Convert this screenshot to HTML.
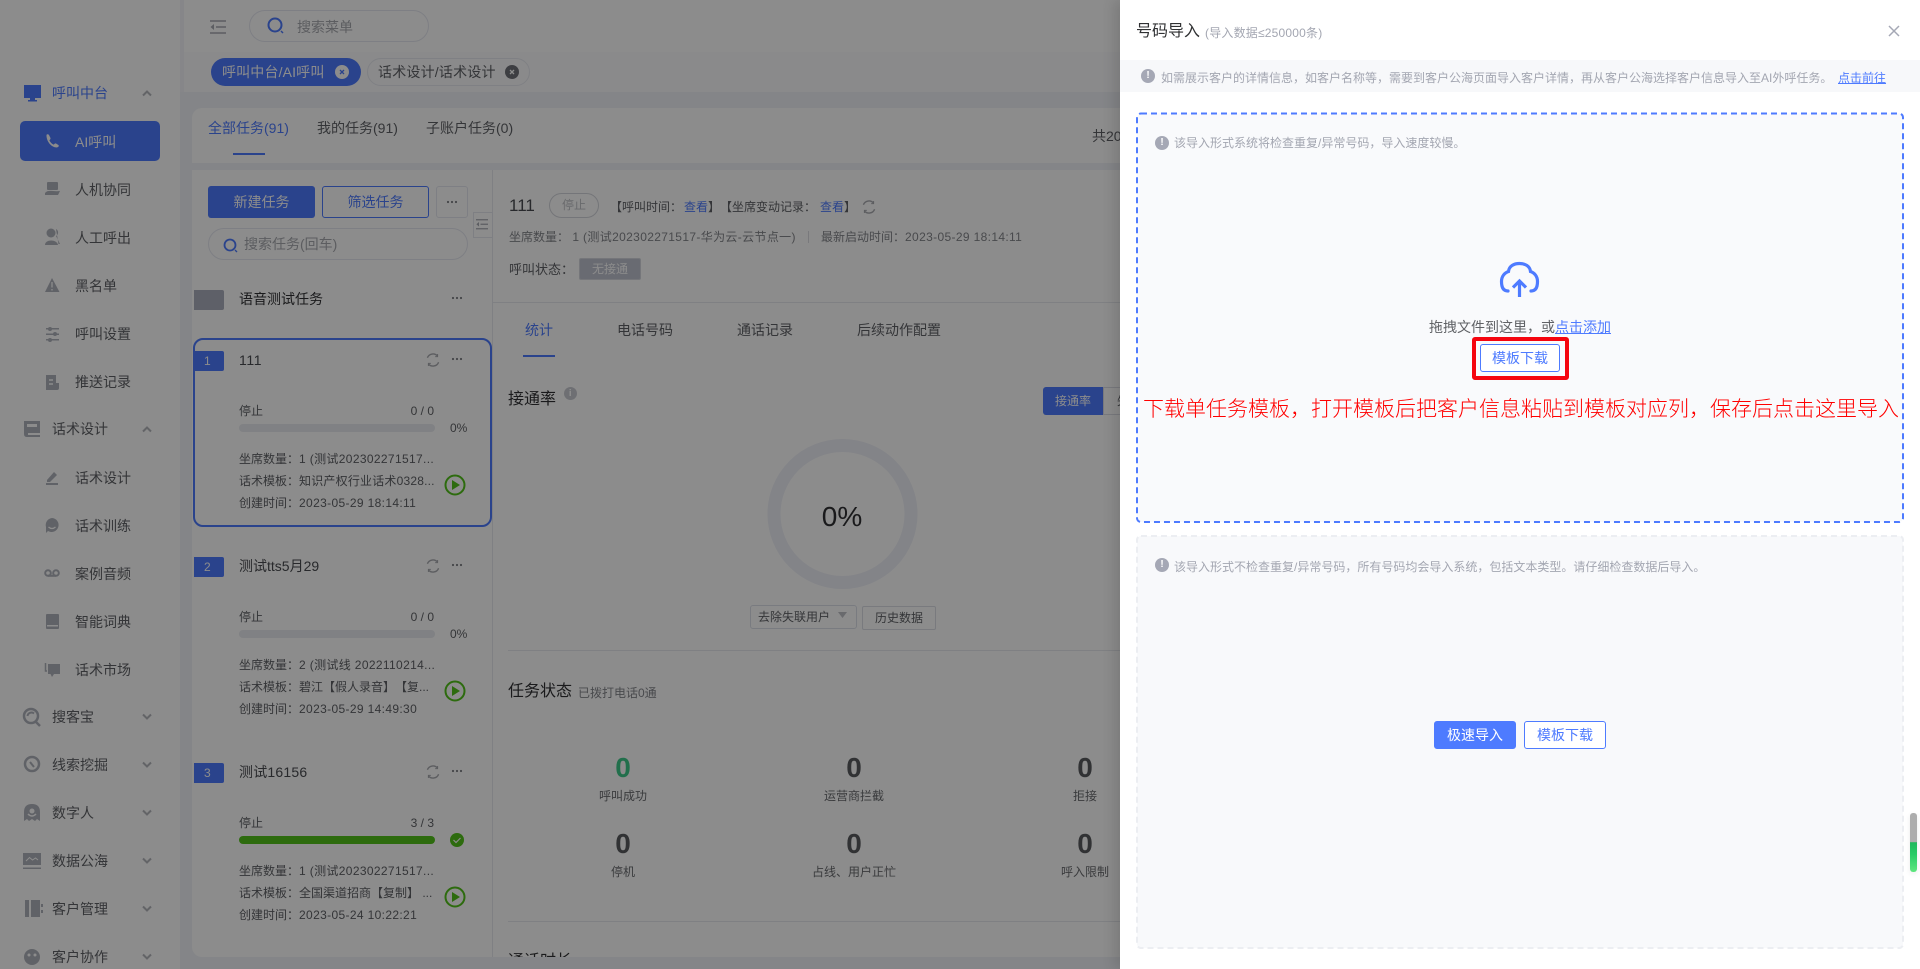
<!DOCTYPE html>
<html lang="zh-CN">
<head>
<meta charset="utf-8">
<title>号码导入</title>
<style>
*{box-sizing:border-box}
html,body{margin:0;padding:0;width:1920px;height:969px;overflow:hidden;background:#fff}
body{font-family:"Liberation Sans","Noto Sans CJK SC",sans-serif;font-size:14px;color:#606266;position:relative;text-spacing-trim:space-all}
.a{position:absolute}
.t{position:absolute;height:20px;line-height:20px;white-space:nowrap}
.s12{font-size:12px}.s16{font-size:16px}
.c{text-align:center}
.blue{color:#4e7bff}
.dk{color:#4a4c50}
.ls{letter-spacing:.35px}
.ls1{letter-spacing:.2px}
svg{position:absolute;left:0;top:0;overflow:visible}
.bar{position:absolute;left:239px;width:196px;height:8px;border-radius:4px;background:#e9ebf0}
.badge{position:absolute;left:194px;width:30px;height:20px;background:#4e7bff;color:#fff;font-size:12px;line-height:20px;padding-left:10px;border-radius:0 2px 2px 0}
.num{position:absolute;width:120px;text-align:center;font-size:28px;font-weight:bold;line-height:30px;height:30px;color:#5a5c60}
.lab{position:absolute;width:140px;text-align:center;font-size:12px;line-height:20px;height:20px;color:#6a6c70}
#overlay{position:absolute;left:0;top:0;width:1120px;height:969px;background:rgba(0,0,0,.45)}
#drawer{position:absolute;left:1120px;top:0;width:800px;height:969px;background:#fff;box-shadow:-6px 0 12px rgba(0,0,0,.12);overflow:hidden}
#drawer .t{color:#a3a6b1;font-size:12px}
.ic{position:absolute;width:14px;height:14px;border-radius:50%;background:#a5a8b5;color:#fff;font-size:10px;line-height:14px;text-align:center;font-weight:bold}
.btn{position:absolute;height:28px;line-height:26px;border:1px solid #4e7bff;border-radius:3px;background:#fff;color:#4e7bff;text-align:center;font-size:14px}
</style>
</head>
<body>
<!-- Underlying application -->
<div class="a" style="left:0;top:0;width:1120px;height:969px;background:#fff;overflow:hidden">
  <div class="a" style="left:180px;top:92px;width:940px;height:877px;background:#f0f2f7"></div>
  <div class="a" style="left:180px;top:0;width:4px;height:92px;background:#f4f5f9"></div>
  <div class="a" style="left:184px;top:52px;width:936px;height:40px;background:#fbfbfd"></div>
  <div class="a" style="left:192px;top:108px;width:928px;height:55px;background:#fff;border-radius:10px 0 0 0"></div>
  <div class="a" style="left:192px;top:170px;width:928px;height:787px;background:#fff;border-radius:0 0 0 10px;overflow:hidden">
    <div class="t" style="left:316px;top:782px;font-size:16px;color:#303133">通话时长</div>
  </div>
  <div class="a" style="left:492px;top:170px;width:1px;height:787px;background:#e8e9ee"></div>
  <div class="a" style="left:493px;top:302px;width:627px;height:1px;background:#e8e9ee"></div>
  <div class="a" style="left:508px;top:650px;width:612px;height:1px;background:#e8e9ee"></div>
  <div class="a" style="left:508px;top:921px;width:612px;height:1px;background:#e8e9ee"></div>

  <!-- Sidebar -->
  <div class="a" style="left:20px;top:121px;width:140px;height:40px;background:#4e7bff;border-radius:5px"></div>
  <div class="t blue" style="left:52px;top:83px">呼叫中台</div>
  <div class="t" style="left:75px;top:132px;color:#fff">AI呼叫</div>
  <div class="t" style="left:75px;top:180px">人机协同</div>
  <div class="t" style="left:75px;top:228px">人工呼出</div>
  <div class="t" style="left:75px;top:276px">黑名单</div>
  <div class="t" style="left:75px;top:324px">呼叫设置</div>
  <div class="t" style="left:75px;top:372px">推送记录</div>
  <div class="t" style="left:52px;top:419px">话术设计</div>
  <div class="t" style="left:75px;top:468px">话术设计</div>
  <div class="t" style="left:75px;top:516px">话术训练</div>
  <div class="t" style="left:75px;top:564px">案例音频</div>
  <div class="t" style="left:75px;top:612px">智能词典</div>
  <div class="t" style="left:75px;top:660px">话术市场</div>
  <div class="t" style="left:52px;top:707px">搜客宝</div>
  <div class="t" style="left:52px;top:755px">线索挖掘</div>
  <div class="t" style="left:52px;top:803px">数字人</div>
  <div class="t" style="left:52px;top:851px">数据公海</div>
  <div class="t" style="left:52px;top:899px">客户管理</div>
  <div class="t" style="left:52px;top:947px">客户协作</div>

  <!-- Header -->
  <div class="a" style="left:249px;top:10px;width:180px;height:32px;border:1px solid #e6e8f0;border-radius:16px"></div>
  <div class="t" style="left:297px;top:17px;color:#a8aab0">搜索菜单</div>
  <div class="a" style="left:211px;top:58px;width:150px;height:28px;background:#4e7bff;border-radius:14px"></div>
  <div class="t" style="left:222px;top:62px;color:#fff;letter-spacing:.15px">呼叫中台/AI呼叫</div>
  <div class="a" style="left:367px;top:58px;width:163px;height:28px;border:1px solid #e8eaf0;border-radius:14px"></div>
  <div class="t" style="left:378px;top:62px;letter-spacing:.2px">话术设计/话术设计</div>

  <!-- Tabs -->
  <div class="t blue" style="left:208px;top:118px">全部任务(91)</div>
  <div class="t" style="left:317px;top:118px">我的任务(91)</div>
  <div class="t" style="left:426px;top:118px">子账户任务(0)</div>
  <div class="a" style="left:233px;top:153px;width:32px;height:2px;background:#4e7bff"></div>
  <div class="t" style="left:1092px;top:126px">共20</div>

  <!-- Task list -->
  <div class="a" style="left:208px;top:186px;width:107px;height:32px;background:#4e7bff;border-radius:3px;color:#fff;text-align:center;line-height:32px">新建任务</div>
  <div class="a" style="left:322px;top:186px;width:107px;height:32px;border:1px solid #4e7bff;border-radius:3px;color:#4e7bff;text-align:center;line-height:30px">筛选任务</div>
  <div class="a" style="left:436px;top:186px;width:32px;height:32px;border:1px solid #e6e8f0;border-radius:3px"></div>
  <div class="a" style="left:473px;top:212px;width:20px;height:26px;border:1px solid #e6e8ee;background:#fff"></div>
  <div class="a" style="left:208px;top:228px;width:260px;height:32px;border:1px solid #e6e8f0;border-radius:16px"></div>
  <div class="t" style="left:244px;top:234px;color:#a8aab0">搜索任务(回车)</div>
  <div class="a" style="left:194px;top:290px;width:30px;height:20px;background:#acb0bd;border-radius:0 2px 2px 0"></div>
  <div class="t" style="left:239px;top:289px;color:#303133">语音测试任务</div>

  <!-- Card 1 -->
  <div class="a" style="left:193px;top:338px;width:299px;height:189px;border:2px solid #4e7bff;border-radius:10px"></div>
  <div class="badge" style="top:351px">1</div>
  <div class="t dk" style="left:239px;top:350px;letter-spacing:.6px">111</div>
  <div class="t s12" style="left:239px;top:401px">停止</div>
  <div class="t s12" style="left:380px;top:401px;width:54px;text-align:right">0 / 0</div>
  <div class="bar" style="top:424px"></div>
  <div class="t s12" style="left:450px;top:418px">0%</div>
  <div class="t s12" style="left:239px;top:449px">坐席数量：<span class="ls">1 (测试202302271517...</span></div>
  <div class="t s12" style="left:239px;top:471px">话术模板：<span class="ls1">知识产权行业话术0328...</span></div>
  <div class="t s12" style="left:239px;top:493px">创建时间：<span class="ls">2023-05-29 18:14:11</span></div>

  <!-- Card 2 -->
  <div class="badge" style="top:557px">2</div>
  <div class="t dk" style="left:239px;top:556px">测试tts5月29</div>
  <div class="t s12" style="left:239px;top:607px">停止</div>
  <div class="t s12" style="left:380px;top:607px;width:54px;text-align:right">0 / 0</div>
  <div class="bar" style="top:630px"></div>
  <div class="t s12" style="left:450px;top:624px">0%</div>
  <div class="t s12" style="left:239px;top:655px">坐席数量：<span class="ls">2 (测试线 2022110214...</span></div>
  <div class="t s12" style="left:239px;top:677px">话术模板：碧江【假人录音】【复...</div>
  <div class="t s12" style="left:239px;top:699px">创建时间：<span class="ls">2023-05-29 14:49:30</span></div>

  <!-- Card 3 -->
  <div class="badge" style="top:763px">3</div>
  <div class="t dk" style="left:239px;top:762px;letter-spacing:.2px">测试16156</div>
  <div class="t s12" style="left:239px;top:813px">停止</div>
  <div class="t s12" style="left:380px;top:813px;width:54px;text-align:right">3 / 3</div>
  <div class="bar" style="top:836px;background:#52c41a"></div>
  <div class="t s12" style="left:239px;top:861px">坐席数量：<span class="ls">1 (测试202302271517...</span></div>
  <div class="t s12" style="left:239px;top:883px">话术模板：全国渠道招商【复制】 ...</div>
  <div class="t s12" style="left:239px;top:905px">创建时间：<span class="ls">2023-05-24 10:22:21</span></div>

  <!-- Detail header -->
  <div class="t dk" style="left:509px;top:196px;font-size:17px">111</div>
  <div class="a c" style="left:549px;top:193px;width:50px;height:25px;border:1px solid #d4d6dc;border-radius:13px;color:#bfc1c6;font-size:12px;line-height:23px">停止</div>
  <div class="t s12" style="left:610px;top:197px">【呼叫时间：</div>
  <div class="t s12 blue" style="left:684px;top:197px">查看</div>
  <div class="t s12" style="left:708px;top:197px">】</div>
  <div class="t s12" style="left:720px;top:197px">【坐席变动记录：</div>
  <div class="t s12 blue" style="left:820px;top:197px">查看</div>
  <div class="t s12" style="left:844px;top:197px">】</div>
  <div class="t s12" style="left:509px;top:227px;color:#85878c">坐席数量： <span class="ls">1 (测试202302271517-华为云-云节点一)</span></div>
  <div class="a" style="left:808px;top:231px;width:1px;height:12px;background:#dcdde2"></div>
  <div class="t s12" style="left:821px;top:227px;color:#85878c">最新启动时间：<span class="ls">2023-05-29 18:14:11</span></div>
  <div class="t" style="left:509px;top:260px;font-size:13px">呼叫状态：</div>
  <div class="a c" style="left:579px;top:258px;width:62px;height:22px;background:#c0c3d0;border:1px solid #d6d8de;border-radius:2px;color:#fff;font-size:12px;line-height:20px">无接通</div>

  <!-- Detail tabs -->
  <div class="t blue" style="left:525px;top:320px">统计</div>
  <div class="t" style="left:617px;top:320px">电话号码</div>
  <div class="t" style="left:737px;top:320px">通话记录</div>
  <div class="t" style="left:857px;top:320px">后续动作配置</div>
  <div class="a" style="left:523px;top:355px;width:32px;height:2px;background:#4e7bff"></div>

  <div class="t s16" style="left:508px;top:390px;color:#303133">接通率</div>
  <div class="a" style="left:564px;top:387px;width:13px;height:13px;border-radius:50%;background:#c9cbd1"></div>
  <div class="a c" style="left:1043px;top:387px;width:60px;height:28px;background:#4e7bff;color:#fff;font-size:12px;line-height:28px;border-radius:3px 0 0 3px">接通率</div>
  <div class="a" style="left:1103px;top:387px;width:60px;height:28px;border:1px solid #dcdfe6;padding-left:13px;font-size:12px;line-height:26px;white-space:nowrap;overflow:hidden">失联率</div>

  <div class="t" style="left:802px;top:502px;width:80px;height:30px;line-height:30px;text-align:center;font-size:28px;color:#303133">0%</div>

  <div class="a" style="left:750px;top:605px;width:107px;height:24px;border:1px solid #dde0ea;border-radius:3px;font-size:12px;line-height:22px;padding-left:7px">去除失联用户</div>
  <div class="a c" style="left:862px;top:606px;width:74px;height:24px;border:1px solid #dcdfe6;border-radius:2px;font-size:12px;line-height:22px">历史数据</div>

  <div class="t s16" style="left:508px;top:682px;color:#303133">任务状态</div>
  <div class="t s12" style="left:578px;top:683px;color:#85878c">已拨打电话0通</div>

  <div class="num" style="left:563px;top:753px;color:#3fcb8a">0</div>
  <div class="num" style="left:794px;top:753px">0</div>
  <div class="num" style="left:1025px;top:753px">0</div>
  <div class="lab" style="left:553px;top:786px">呼叫成功</div>
  <div class="lab" style="left:784px;top:786px">运营商拦截</div>
  <div class="lab" style="left:1015px;top:786px">拒接</div>
  <div class="num" style="left:563px;top:829px">0</div>
  <div class="num" style="left:794px;top:829px">0</div>
  <div class="num" style="left:1025px;top:829px">0</div>
  <div class="lab" style="left:553px;top:862px">停机</div>
  <div class="lab" style="left:784px;top:862px">占线、用户正忙</div>
  <div class="lab" style="left:1015px;top:862px">呼入限制</div>

  <!-- All icons -->
  <svg width="1120" height="969" viewBox="0 0 1120 969" fill="none">
    <defs>
      <g id="rf" stroke="#a8aab0" stroke-width="1.4" fill="none">
        <path d="M-5.6-2.2A6 6 0 0 1 4.6-3.9"/><path d="M5.6 2.2A6 6 0 0 1-4.6 3.9"/>
        <path d="M4.6-6V-3.4H2.200" stroke-width="1"/><path d="M-4.6 6V3.4H-2.200" stroke-width="1"/>
      </g>
      <g id="dots" fill="#7c7e84"><circle cx="-4" r="1.1"/><circle r="1.1"/><circle cx="4" r="1.1"/></g>
      <g id="play"><circle r="9.5" stroke="#52c41a" stroke-width="2" fill="none"/><path d="M-3-5L5 0L-3 5Z" fill="#52c41a"/></g>
      <path id="dn" d="M-4-2.5L0 1.5L4-2.5" stroke="#b4b6bc" stroke-width="2" fill="none"/>
      <path id="up" d="M-4 2.5L0-1.5L4 2.5" stroke="#b4b6bc" stroke-width="2" fill="none"/>
      <g id="menu" stroke="#a8aab2" stroke-width="1.6"><path d="M0 1H16M6 7H16M0 13H16"/><path d="M4 4L0.5 7L4 10Z" fill="#a8aab2" stroke="none"/></g>
    </defs>

    <!-- sidebar icons -->
    <g fill="#4e7bff"><rect x="24" y="85" width="17" height="13"/><rect x="30" y="98" width="5" height="2"/><rect x="28" y="100" width="9" height="1.5"/></g>
    <use href="#up" x="147" y="93"/>
    <path d="M46.500 135.500C46.500 134 48 134 49 135L50.500 138C50.800 139 49.800 139.800 49.400 140.200C50 142 52 144 53.800 144.600C54.400 144 55.200 143.200 56 143.500L58.400 145C59.300 146 58.500 147 57 147.500C51 147.500 46.500 141 46.500 135.500Z" fill="#fff"/>
    <g fill="#b0b3bc">
      <rect x="47" y="182" width="11" height="8" rx="1"/><path d="M45 193C48 189 53 192 60 191L58 195H45Z"/>
      <circle cx="51" cy="233" r="4.500"/><path d="M45 245C45 239 57 239 58 245Z"/><path d="M56 229A4 4 0 0 1 56 236L60 244H58.500Z"/>
      <path d="M52 278L59.500 292H45Z"/>
      <rect x="46" y="328" width="13" height="1.500"/><rect x="46" y="333.500" width="13" height="1.500"/><rect x="46" y="339" width="13" height="1.500"/>
      <circle cx="50" cy="329" r="2"/><circle cx="55" cy="334" r="2"/><circle cx="50" cy="340" r="2"/>
      <path d="M46 375H56V383H59V388Q59 390 57 390H46Z"/>
      <path d="M24 421H40V433H28V435H40V437H27Q24 437 24 434Z"/>
      <path d="M46 483H58V485H46Z"/><path d="M47 480L54 472L57 475L50 482H47Z"/>
      <path d="M52 518A7 7 0 1 1 48 531L46 533V527A7 7 0 0 1 52 518Z"/>
      <rect x="46" y="614" width="13" height="15" rx="1"/>
      <path d="M48 664H60V674H54L52 677L50.500 674H48Z"/>
      <path d="M24 812Q24 804 32 804Q40 804 40 812V821L37 819L35 821L32 819L29 821L27 819L24 821Z"/>
      <path d="M25 917V900H29V917Z"/><path d="M31 900H40V917H31Z"/><rect x="41" y="904" width="2" height="3"/><rect x="41" y="910" width="2" height="3"/>
      <rect x="23" y="853" width="18" height="12"/><rect x="23" y="867.500" width="18" height="1.500"/>
    </g>
    <g stroke="#b0b3bc" fill="none">
      <path d="M45.500 663V671H47" stroke-width="1.500"/>
      <g stroke-width="2.500"><circle cx="31" cy="716" r="7"/><path d="M36 722L40 726"/><circle cx="32" cy="764" r="7"/></g>
      <path d="M30 762L34 767M27.500 716A4 4 0 0 1 34 713.500" stroke-width="2"/>
      <g stroke-width="2"><circle cx="48" cy="573" r="2.800"/><circle cx="56" cy="573" r="2.800"/><path d="M48 575.800H56"/></g>
    </g>
    <path d="M26 861L29.500 857.500L32.500 860L35.500 858L38 860" stroke="#fff" stroke-width="1" fill="none"/>
    <circle cx="32" cy="957" r="8" fill="#b0b3bc"/>
    <path d="M52 282V287.500M52 289V290.500" stroke="#fff" stroke-width="1.300"/>
    <rect x="27" y="424" width="10" height="3" fill="#fff"/>
    <rect x="47" y="625" width="11" height="1.500" fill="#fff"/>
    <path d="M48.500 527Q52 530 55.500 527" stroke="#fff" stroke-width="1.300" fill="none"/>
    <circle cx="32" cy="811" r="2.500" fill="#fff"/>
    <path d="M28 814Q32 818 36 814" stroke="#fff" stroke-width="1.500" fill="none"/>
    <circle cx="29" cy="955" r="1.500" fill="#fff"/><circle cx="35" cy="955" r="1.500" fill="#fff"/>
    <path d="M49 380H53M49 384H53" stroke="#fff" stroke-width="1.500"/>
    <use href="#up" x="147" y="429"/>
    <use href="#dn" x="147" y="717"/><use href="#dn" x="147" y="765"/><use href="#dn" x="147" y="813"/>
    <use href="#dn" x="147" y="861"/><use href="#dn" x="147" y="909"/><use href="#dn" x="147" y="957"/>

    <!-- header -->
    <use href="#menu" x="210" y="20"/>
    <circle cx="275" cy="25" r="6.500" stroke="#4e7bff" stroke-width="2"/><path d="M281 31L283 33" stroke="#4e7bff" stroke-width="1.500"/>
    <circle cx="342" cy="72" r="7" fill="#fff"/><path d="M340 70L344 74M344 70L340 74" stroke="#4e7bff" stroke-width="1.300"/>
    <circle cx="512" cy="72" r="7" fill="#707278"/><path d="M510 70L514 74M514 70L510 74" stroke="#fff" stroke-width="1.300"/>

    <!-- list controls -->
    <use href="#dots" x="452" y="202"/>
    <g transform="translate(476 219) scale(.75)"><use href="#menu"/></g>
    <circle cx="230" cy="245" r="5.500" stroke="#4e7bff" stroke-width="1.800"/><path d="M235 250L237 252" stroke="#4e7bff" stroke-width="1.300"/>
    <use href="#dots" x="457" y="298"/>
    <use href="#rf" x="433" y="360"/><use href="#dots" x="457" y="359"/><use href="#play" x="455" y="485"/>
    <use href="#rf" x="433" y="566"/><use href="#dots" x="457" y="565"/><use href="#play" x="455" y="691"/>
    <use href="#rf" x="433" y="772"/><use href="#dots" x="457" y="771"/><use href="#play" x="455" y="897"/>
    <circle cx="457" cy="840" r="7" fill="#52c41a"/><path d="M453.500 840L456 842.500L460.500 838" stroke="#fff" stroke-width="1.200"/>

    <!-- detail -->
    <use href="#rf" x="869" y="207"/>
    <circle cx="842.500" cy="514" r="68.500" stroke="#eef0f8" stroke-width="13"/>
    <path d="M838 612H847L842.500 618Z" fill="#bfc1c6"/>
    <rect x="569.500" y="391" width="1.500" height="5" fill="#fff"/><rect x="569.500" y="389" width="1.500" height="1.300" fill="#fff"/>
  </svg>
</div>
<div id="overlay"></div>

<!-- Drawer -->
<div id="drawer">
  <div class="a" style="left:0;top:60px;width:800px;height:32px;background:#f7f8fa"></div>
  <svg width="800" height="969" viewBox="0 0 800 969" fill="none">
    <rect x="17" y="113.500" width="766" height="408.500" rx="4" fill="#f9fafc" stroke="#4e7bff" stroke-width="2" stroke-dasharray="6 4"/>
    <rect x="17" y="536" width="766" height="412" rx="4" fill="#f8f9fb" stroke="#eceef2" stroke-width="2" stroke-dasharray="6 4"/>
    <path d="M769 26L779 36M779 26L769 36" stroke="#a5a8b5" stroke-width="1.500"/>
    <!-- Upload cloud -->
    <path d="M388 291C382 291 381.500 285 381.500 281.500C381.500 276 385 272.500 388.500 271.500C389 266 394 263.500 399.500 263.500C405 263.500 410 266 410.500 271.500C414 272.500 417.500 276 417.500 281.500C417.500 285 417 291 411 291" stroke="#4e7bff" stroke-width="3.200" stroke-linecap="round"/>
    <path d="M399.500 297V281M393 287.500L399.500 281L406 287.500" stroke="#4e7bff" stroke-width="3.200"/>
  </svg>
  <div class="t" style="left:16px;top:22px;font-size:16px;color:#303133">号码导入</div>
  <div class="t" style="left:85px;top:23px;letter-spacing:.2px">(导入数据≤250000条)</div>
  <div class="ic" style="left:21px;top:69px">!</div>
  <div class="t" style="left:41px;top:68px">如需展示客户的详情信息，如客户名称等，需要到客户公海页面导入客户详情，再从客户公海选择客户信息导入至AI外呼任务。</div>
  <div class="t" style="left:718px;top:68px;color:#4e7bff;text-decoration:underline">点击前往</div>

  <div class="ic" style="left:35px;top:136px">!</div>
  <div class="t" style="left:54px;top:133px">该导入形式系统将检查重复/异常号码，导入速度较慢。</div>
  <div class="t" style="left:309px;top:317px;font-size:14px;color:#606266">拖拽文件到这里，或<span style="color:#4e7bff;text-decoration:underline">点击添加</span></div>
  <div class="a" style="left:352px;top:337px;width:97px;height:43px;border:4px solid #f5050f;border-radius:3px"></div>
  <div class="btn" style="left:360px;top:344px;width:80px">模板下载</div>
  <div class="t" style="left:23px;top:395px;height:30px;line-height:30px;font-size:21px;color:#ff0000;font-weight:300">下载单任务模板，打开模板后把客户信息粘贴到模板对应列，保存后点击这里导入</div>

  <div class="ic" style="left:35px;top:558px">!</div>
  <div class="t" style="left:54px;top:557px">该导入形式不检查重复/异常号码，所有号码均会导入系统，包括文本类型。请仔细检查数据后导入。</div>
  <div class="btn" style="left:314px;top:721px;width:82px;background:#4e7bff;color:#fff">极速导入</div>
  <div class="btn" style="left:404px;top:721px;width:82px">模板下载</div>

  <div class="a" style="left:790px;top:813px;width:7px;height:59px;border-radius:3px;background:linear-gradient(#adadad 0,#adadad 49%,#1fb85c 50%,#27cc66 70%,#5fe67f 100%);box-shadow:0 2px 6px rgba(0,0,0,.08)"></div>
</div>
</body>
</html>
